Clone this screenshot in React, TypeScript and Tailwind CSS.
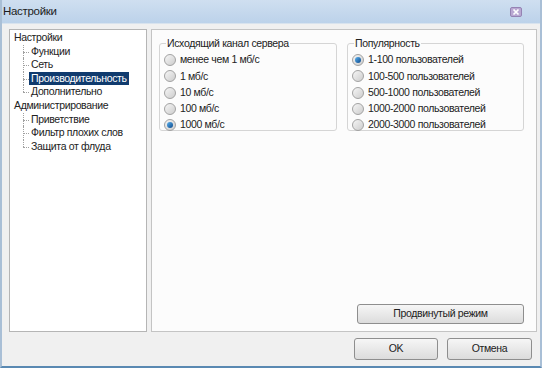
import React from 'react';

const font = { fontFamily: '"Liberation Sans", "DejaVu Sans", sans-serif' };

interface RadioProps {
  label: string;
  checked?: boolean;
}

const Radio: React.FC<RadioProps> = ({ label, checked }) => (
  <div className="flex items-center h-[16.3px] gap-[4px]">
    <span className="w-[12px] h-[12px] rounded-full border border-[#a2a2a2] bg-gradient-to-br from-[#f6f6f6] to-[#cdcdcd] flex items-center justify-center">
      {checked && (
        <span className="w-[6px] h-[6px] rounded-full bg-gradient-to-br from-[#5bb2ef] to-[#0c4a8c]" />
      )}
    </span>
    <span className="text-[10.5px] tracking-[-0.35px] text-[#222]">{label}</span>
  </div>
);

const GroupBox: React.FC<{ title: string; items: string[]; selected: number; width: string }> = ({
  title,
  items,
  selected,
  width,
}) => (
  <fieldset className={`${width} h-[94px] border border-[#d5d5d5] rounded-[3px] pl-[4px]`}>
    <legend className="text-[10.5px] tracking-[-0.35px] text-[#222] ml-[2px] px-[1px] leading-[12px]">{title}</legend>
    <div className="flex flex-col pt-[3px]">
      {items.map((it, i) => (
        <Radio key={it} label={it} checked={i === selected} />
      ))}
    </div>
  </fieldset>
);

const TreeChild: React.FC<{ label: string; selected?: boolean; last?: boolean }> = ({ label, selected, last }) => (
  <div className="relative flex items-center h-[13.6px] pl-[15px]">
    <span className="absolute left-[9px] top-[7px] w-[6px] border-t border-dotted border-[#a0a0a0]" />
    <span
      className={`absolute left-[9px] top-0 border-l border-dotted border-[#a0a0a0] ${last ? 'h-[7px]' : 'h-[13.6px]'}`}
    />
    <span className={`px-[2px] leading-[13.6px] ${selected ? 'bg-[#103b6e] text-white' : 'text-[#222]'}`}>{label}</span>
  </div>
);

export default function App() {
  return (
    <div
      style={font}
      className="w-[542px] h-[368px] flex flex-col bg-[#f0f0f0] border-l-[2px] border-l-[#a9bfd6] border-r-[2px] border-r-[#a9bfd6] border-b-[2px] border-b-[#5a89b2] overflow-hidden"
    >
      {/* Title bar */}
      <div className="h-[24px] flex items-center justify-between pl-[1px] pr-[18px] bg-gradient-to-b from-[#cfdff0] to-[#bcd2ea] border-b border-[#d8e3ee]">
        <span className="text-[11.5px] tracking-[-0.3px] text-[#1c1c1c]">Настройки</span>
        <svg width="12" height="10" viewBox="0 0 12 10">
          <rect x="0.5" y="0.5" width="11" height="9" rx="1.5" fill="#b9a8d2" stroke="#9583b3" />
          <path d="M3.5 2.5 L8.5 7.5 M8.5 2.5 L3.5 7.5" stroke="#fff" strokeWidth="1.7" />
        </svg>
      </div>

      {/* Body */}
      <div className="flex-1 flex flex-col pl-[7px] pr-[3px] pt-[5px]">
        <div className="flex gap-[4px]">
          {/* Tree */}
          <div className="w-[140px] h-[303px] bg-white border border-[#b5b5b5] pt-[1px] pl-[4px] text-[10.5px] tracking-[-0.35px]">
            <div className="leading-[13.6px] text-[#222] h-[13.6px]">Настройки</div>
            <TreeChild label="Функции" />
            <TreeChild label="Сеть" />
            <TreeChild label="Производительность" selected />
            <TreeChild label="Дополнительно" last />
            <div className="leading-[13.6px] text-[#222] h-[13.6px]">Администрирование</div>
            <TreeChild label="Приветствие" />
            <TreeChild label="Фильтр плохих слов" />
            <TreeChild label="Защита от флуда" last />
          </div>

          {/* Settings panel */}
          <div className="w-[386px] h-[303px] bg-[#fcfcfc] border border-[#c4c4c4] flex flex-col pl-[7px] pr-[12px] pt-[7px] pb-[7px]">
            <div className="flex gap-[10px]">
              <GroupBox
                title="Исходящий канал сервера"
                width="w-[178px]"
                selected={4}
                items={['менее чем 1 мб/с', '1 мб/с', '10 мб/с', '100 мб/с', '1000 мб/с']}
              />
              <GroupBox
                title="Популярность"
                width="w-[177px]"
                selected={0}
                items={[
                  '1-100 пользователей',
                  '100-500 пользователей',
                  '500-1000 пользователей',
                  '1000-2000 пользователей',
                  '2000-3000 пользователей',
                ]}
              />
            </div>
            <div className="mt-auto flex justify-end">
              <button className="w-[167px] h-[20px] text-[10.5px] tracking-[-0.35px] text-[#222] border border-[#8e8e8e] rounded-[3px] bg-gradient-to-b from-[#f6f6f6] to-[#dcdcdc]">
                Продвинутый режим
              </button>
            </div>
          </div>
        </div>

        {/* Dialog buttons */}
        <div className="flex justify-end gap-[9px] mt-[6px] pr-[5px]">
          <button className="w-[84px] h-[22px] text-[10.5px] tracking-[-0.35px] text-[#222] border border-[#8e8e8e] rounded-[3px] bg-gradient-to-b from-[#f6f6f6] to-[#dcdcdc]">
            OK
          </button>
          <button className="w-[85px] h-[22px] text-[10.5px] tracking-[-0.35px] text-[#222] border border-[#8e8e8e] rounded-[3px] bg-gradient-to-b from-[#f6f6f6] to-[#dcdcdc]">
            Отмена
          </button>
        </div>
      </div>
    </div>
  );
}
